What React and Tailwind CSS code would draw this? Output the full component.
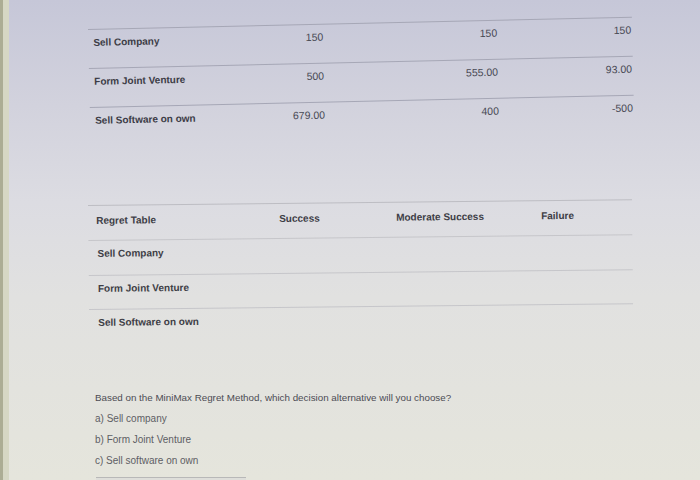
import React from "react";

const top = [
  ["Sell Company", "150", "150", "150"],
  ["Form Joint Venture", "500", "555.00", "93.00"],
  ["Sell Software on own", "679.00", "400", "-500"],
];

const regretRows = ["Sell Company", "Form Joint Venture", "Sell Software on own"];

export default function App() {
  return (
    <div className="w-[700px] h-[480px] overflow-hidden flex bg-[linear-gradient(180deg,#c6c7d8_0%,#d2d2dd_22%,#dcdce2_42%,#e1e1e0_62%,#e5e5dc_100%)] font-['Liberation_Sans',Arial,sans-serif]">
      <div className="w-[3px] shrink-0 bg-[#acad94]" />
      <div className="w-[6px] shrink-0 bg-[#d6d7c4]" />
      <div className="flex-1 flex flex-col pl-[79px]">
        {/* top payoff table */}
        <div className="mt-[29px] w-[544px] origin-top-left rotate-[-1.3deg]">
          {top.map((r, i) => (
            <div
              key={i}
              className="h-[39px] border-t border-[#a6a7b6] grid grid-cols-[150px_85px_174px_1fr] pt-[6px] leading-[13px]"
            >
              <div className="pl-[5px] text-[10px] font-bold text-[#3c3c46]">{r[0]}</div>
              <div className="text-right text-[10.5px] text-[#484954]">{r[1]}</div>
              <div className="text-right text-[10.5px] text-[#484954]">{r[2]}</div>
              <div className="text-right pr-[1px] text-[10.5px] text-[#484954]">{r[3]}</div>
            </div>
          ))}
        </div>

        {/* regret table */}
        <div className="mt-[59px] w-[544px] origin-top-left rotate-[-0.6deg]">
          <div className="h-[35px] border-t border-[#bdbdc3] grid grid-cols-[191px_117px_145px_1fr] pt-[8px] leading-[13px] text-[10px] font-bold text-[#3e3e46]">
            <div className="pl-[8px]">Regret Table</div>
            <div>Success</div>
            <div>Moderate Success</div>
            <div>Failure</div>
          </div>
          {regretRows.map((r, i) => (
            <div
              key={i}
              className="h-[34.5px] border-t border-[#c6c6ca] pt-[6px] leading-[13px] text-[10px] font-bold text-[#3e3e46]"
            >
              <div className="pl-[9px]">{r}</div>
            </div>
          ))}
        </div>

        {/* question */}
        <div className="mt-[43px] pl-[7px] text-[9.8px] leading-[21px]">
          <div className="text-[#4c4c54]">
            Based on the MiniMax Regret Method, which decision alternative will you choose?
          </div>
          <div className="text-[10px] text-[#5e5e64]">a) Sell company</div>
          <div className="text-[10px] text-[#5e5e64]">b) Form Joint Venture</div>
          <div className="text-[10px] text-[#5e5e64]">c) Sell software on own</div>
        </div>
        <div className="mt-[6px] ml-[8px] w-[150px] h-[4px] border-t border-[#b8b8b8] bg-[#dededa]" />
      </div>
    </div>
  );
}
